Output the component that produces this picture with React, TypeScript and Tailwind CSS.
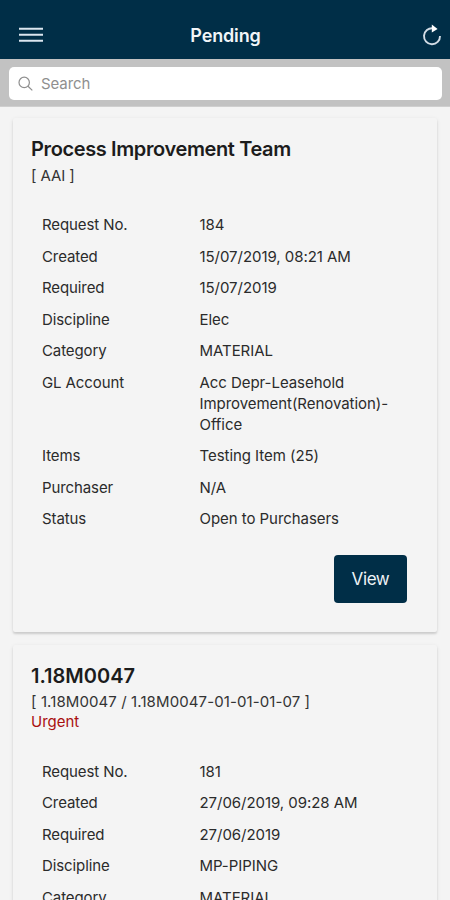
import React from 'react';
import { clsx } from 'clsx';

interface Field {
  label: string;
  value: string;
}

interface PendingRequest {
  title: string;
  reference: string;
  urgent?: boolean;
  fields: Field[];
}

const requests: PendingRequest[] = [
  {
    title: 'Process Improvement Team',
    reference: '[ AAI ]',
    fields: [
      { label: 'Request No.', value: '184' },
      { label: 'Created', value: '15/07/2019, 08:21 AM' },
      { label: 'Required', value: '15/07/2019' },
      { label: 'Discipline', value: 'Elec' },
      { label: 'Category', value: 'MATERIAL' },
      { label: 'GL Account', value: 'Acc Depr-Leasehold Improvement(Renovation)-Office' },
      { label: 'Items', value: 'Testing Item (25)' },
      { label: 'Purchaser', value: 'N/A' },
      { label: 'Status', value: 'Open to Purchasers' },
    ],
  },
  {
    title: '1.18M0047',
    reference: '[ 1.18M0047 / 1.18M0047-01-01-01-07 ]',
    urgent: true,
    fields: [
      { label: 'Request No.', value: '181' },
      { label: 'Created', value: '27/06/2019, 09:28 AM' },
      { label: 'Required', value: '27/06/2019' },
      { label: 'Discipline', value: 'MP-PIPING' },
      { label: 'Category', value: 'MATERIAL' },
    ],
  },
];

const MenuIcon = () => (
  <svg width="24" height="16" viewBox="0 0 24 16" fill="none" stroke="#dbe6f0" strokeWidth="2.1">
    <path d="M0 1.8h24M0 7.8h24M0 13.8h24" />
  </svg>
);

const RefreshIcon = () => (
  <svg width="20" height="22" viewBox="0 0 20 22" fill="none">
    <path d="M11 4.3A8 8 0 1 0 18 12" stroke="#d3dde6" strokeWidth="1.9" />
    <path d="M9.8.6 15.6 5 9.8 8.6z" fill="#fff" />
  </svg>
);

const SearchIcon = () => (
  <svg width="16" height="16" viewBox="0 0 16 16" fill="none" stroke="#8e8e8e" strokeWidth="1.2">
    <circle cx="6.2" cy="6.4" r="5.2" />
    <path d="m10 10.2 4.3 4.2" />
  </svg>
);

const Header = () => (
  <header className="flex h-[59px] shrink-0 items-end justify-between bg-[#002e47] pr-2 pl-[19px]">
    <button className="flex h-12 w-12 items-center" aria-label="Menu">
      <MenuIcon />
    </button>
    <h1 className="flex h-12 items-center pr-5 text-[18px] font-semibold tracking-[-0.15px] text-[#f1f5f8]">
      Pending
    </h1>
    <button className="flex h-12 w-[38px] items-center justify-end" aria-label="Refresh">
      <RefreshIcon />
    </button>
  </header>
);

const SearchBar = () => (
  <div className="h-12 shrink-0 border-b border-[#cfcfcf] bg-[#c2c2c2] px-[9px] pt-2">
    <div className="flex h-[33px] w-[433px] items-center gap-[7px] rounded-[5px] bg-white pl-[9px]">
      <SearchIcon />
      <span className="pt-px text-[15px] tracking-[-0.1px] text-[#8f8f8f]">Search</span>
    </div>
  </div>
);

const RequestCard = ({ request }: { request: PendingRequest }) => (
  <article className="rounded-[2px] bg-[#f4f4f4] px-[18px] pt-[18px] pb-[29px] shadow-[0_2px_2px_rgba(0,0,0,0.12),0_1px_4px_rgba(0,0,0,0.08)]">
    <h2
      className={clsx(
        'text-[20px] leading-[26px] font-semibold text-[#1c1c1c]',
        // Long names are set tighter, plain request codes keep normal spacing
        request.title.length > 12 && 'tracking-[-0.38px]'
      )}
    >
      {request.title}
    </h2>
    <p
      className={clsx(
        'text-[15px] leading-5 text-[#333]',
        request.urgent ? 'mt-[3px] tracking-[0.1px]' : 'mt-1 tracking-[-0.1px]'
      )}
    >
      {request.reference}
    </p>
    {request.urgent && <p className="text-[15px] leading-5 text-[#a90f0f]">Urgent</p>}

    <dl
      className={clsx(
        'px-[11px] text-[15px] leading-[21px] text-[#2b2b2b]',
        request.urgent ? 'mt-6' : 'mt-[23px]'
      )}
    >
      {request.fields.map((field) => (
        <div key={field.label} className="flex py-[5.25px]">
          <dt className="w-[157.5px] shrink-0 tracking-[-0.1px]">{field.label}</dt>
          <dd className="w-[200px] tracking-[-0.05px]">{field.value}</dd>
        </div>
      ))}
    </dl>

    <div className="mt-[20.5px] flex justify-end pr-3">
      <button className="h-[48px] w-[73px] rounded-[4px] bg-[#002e47] pt-px text-[17px] tracking-[-0.4px] text-[#eef3f6]">
        View
      </button>
    </div>
  </article>
);

const App = () => {
  return (
    <div className="flex h-[900px] w-[450px] flex-col overflow-hidden bg-[#f4f4f4] font-['Inter','Liberation_Sans',sans-serif]">
      <Header />
      <SearchBar />
      <main className="flex min-h-0 flex-1 flex-col gap-[12.5px] overflow-hidden px-[13px] pt-[11px]">
        {requests.map((request) => (
          <RequestCard key={request.title} request={request} />
        ))}
      </main>
    </div>
  );
};

export default App;
